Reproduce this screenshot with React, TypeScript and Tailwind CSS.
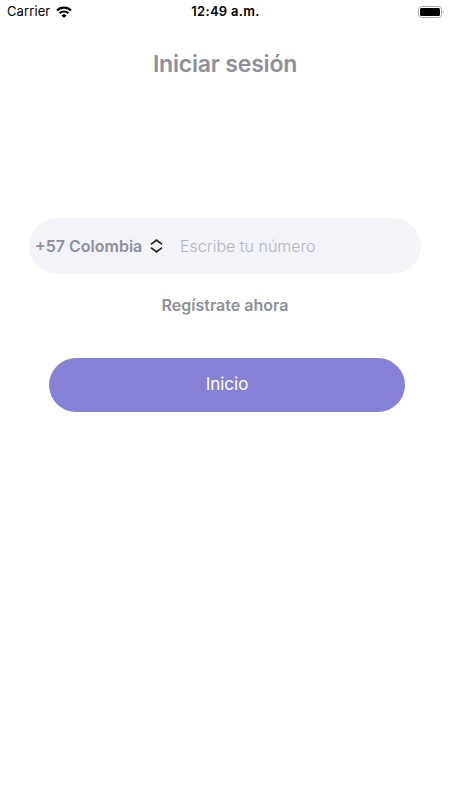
import React, { useState } from "react";

const StatusBar: React.FC = () => (
  <div className="grid h-[23px] grid-cols-3 items-center pl-[7px] pr-[6px] text-[13px] leading-none text-black">
    <div className="flex items-center gap-[6px]">
      <span className="tracking-[0.1px]">Carrier</span>
      <svg width="16" height="12" viewBox="0 0 16 12" aria-hidden="true">
        <g fill="none" stroke="#000" strokeWidth="2.1">
          <path d="M0.9 4.5a10.1 10.1 0 0 1 14.2 0" />
          <path d="M3.6 7.3a6.3 6.3 0 0 1 8.8 0" />
        </g>
        <path d="M8 11.9 5.5 9.4a3.6 3.6 0 0 1 5 0z" fill="#000" />
      </svg>
    </div>
    <span className="text-center font-semibold tracking-[0.3px]">12:49 a.m.</span>
    <div className="flex justify-end">
      <svg width="26" height="12" viewBox="0 0 26 12" aria-hidden="true">
        <rect x="0.5" y="0.5" width="23" height="11" rx="3" fill="none" stroke="#a6a6a6" />
        <rect x="2" y="2" width="20" height="8" rx="1.5" fill="#000" />
        <path d="M24.8 4.2a2 2 0 0 1 0 3.6z" fill="#a6a6a6" />
      </svg>
    </div>
  </div>
);

export default function App() {
  const [phone, setPhone] = useState("");

  return (
    <div className="flex min-h-screen flex-col items-center bg-white font-['Inter',sans-serif]">
      <div className="w-full">
        <StatusBar />
      </div>

      <h1 className="mt-[25px] text-[23px] font-semibold leading-8 tracking-[-0.2px] text-[#8e8f98]">
        Iniciar sesión
      </h1>

      {/* Phone input with country code */}
      <div className="mt-[138px] flex h-14 w-[392px] items-center rounded-full bg-[#f3f4f9] pl-[6px] pr-6">
        <button type="button" className="flex w-[145px] shrink-0 items-center gap-[8px]">
          <span className="whitespace-nowrap text-[16px] font-semibold text-[#8e8f98]">+57 Colombia</span>
          <svg width="13" height="14" viewBox="0 0 13 14" fill="none" stroke="#222" strokeWidth="1.6" aria-hidden="true">
            <path d="M1 5.3 6.5 1 12 5.3" />
            <path d="M1 8.7 6.5 13 12 8.7" />
          </svg>
        </button>
        <input
          type="tel"
          value={phone}
          onChange={(e) => setPhone(e.target.value)}
          placeholder="Escribe tu número"
          className="min-w-0 flex-1 text-[16px] font-light text-[#55565c] placeholder-[#b5b6ba] outline-none"
        />
      </div>

      <button type="button" className="mt-[19px] text-[16px] font-semibold leading-6 text-[#8e8f98]">
        Regístrate ahora
      </button>

      <button
        type="button"
        className="ml-[4px] mt-[41px] h-[54px] w-[356px] rounded-full bg-[#8481d7] text-[17px] text-white"
      >
        Inicio
      </button>
    </div>
  );
}
